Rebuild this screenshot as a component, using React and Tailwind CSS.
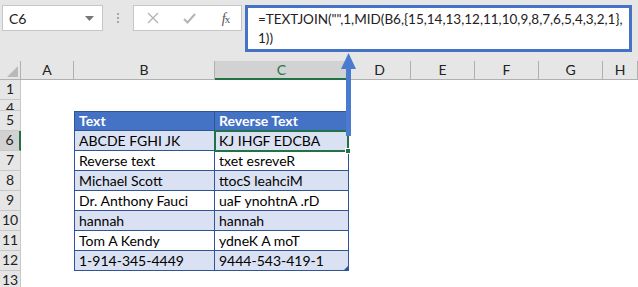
import React from "react";

const font = { fontFamily: "Lato, 'Open Sans', sans-serif" };

const cols = ["A", "B", "C", "D", "E", "F", "G", "H"];

const data = [
  ["ABCDE FGHI JK", "KJ IHGF EDCBA"],
  ["Reverse text", "txet esreveR"],
  ["Michael Scott", "ttocS leahciM"],
  ["Dr. Anthony Fauci", "uaF ynohtnA .rD"],
  ["hannah", "hannah"],
  ["Tom A Kendy", "ydneK A moT"],
  ["1-914-345-4449", "9444-543-419-1"],
];

const gridCols = "grid grid-cols-[21px_53px_141px_134px_62px_64px_64px_64px_35px]";

const RowHead = ({ n, h, active, clipped }) => (
  <div
    className={`${h} flex justify-center border-b border-r border-[#c8c8c8] text-[14px] leading-none text-[#222] overflow-hidden ${
      clipped ? "items-start" : "items-end"
    } ${active ? "bg-[#d2d2d2] border-r-2 border-r-[#217346]" : "bg-[#e6e6e6]"}`}
  >
    <span className={clipped ? "pt-[1px]" : "pb-[3px]"}>{n}</span>
  </div>
);

const Empty = ({ h, n = 1 }) =>
  Array.from({ length: n }).map((_, i) => <div key={i} className={`${h} bg-white`} />);

const Cell = ({ children, first, head, band }) => (
  <div
    className={`h-[20px] flex items-end px-[4px] pb-[2px] border-b border-r border-[#2f5597] text-[14px] leading-none whitespace-nowrap overflow-hidden ${
      first ? "border-l" : ""
    } ${head ? "border-t bg-[#4472c4] text-white font-bold" : band ? "bg-[#d9e1f2] text-black" : "bg-white text-black"}`}
  >
    {children}
  </div>
);

export default function App() {
  return (
    <div className="w-[638px] h-[287px] overflow-hidden bg-white relative" style={font}>
      {/* formula bar */}
      <div className="h-[61px] bg-[#e6e6e6] flex items-start pt-[5px] pl-[2px]">
        <div className="w-[101px] h-[26px] bg-white border border-[#c6c6c6] flex items-center justify-between pl-[6px] pr-[8px] text-[14px] text-[#222]">
          <span>C6</span>
          <svg width="9" height="5" viewBox="0 0 9 5">
            <path d="M0 0h9L4.5 5z" fill="#777" />
          </svg>
        </div>
        <div className="w-[30px] h-[26px] flex flex-col items-center justify-center gap-[2px]">
          <span className="w-[2px] h-[2px] bg-[#a6a6a6]" />
          <span className="w-[2px] h-[2px] bg-[#a6a6a6]" />
          <span className="w-[2px] h-[2px] bg-[#a6a6a6]" />
        </div>
        <div className="w-[109px] h-[26px] bg-white border border-[#c6c6c6] flex items-center">
          <div className="w-[38px] flex justify-center">
            <svg width="12" height="12" viewBox="0 0 12 12">
              <path d="M1 1l10 10M11 1L1 11" stroke="#b4b4b4" strokeWidth="1.4" />
            </svg>
          </div>
          <div className="w-[34px] flex justify-center">
            <svg width="13" height="11" viewBox="0 0 13 11">
              <path d="M1 6l3.5 3.5L12 1" stroke="#b4b4b4" strokeWidth="2" fill="none" />
            </svg>
          </div>
          <div className="flex-1 flex justify-center pl-[5px] text-[14px] italic text-[#555]" style={{ fontFamily: "'Liberation Serif', serif" }}>
            f<span className="text-[11px] not-italic -ml-[1px] mt-[3px]">x</span>
          </div>
        </div>
        <div className="ml-[3px] w-[387px] h-[47px] bg-white border-[3px] border-[#4472c4] pl-[10px] pt-[2px] text-[13.5px] leading-[19px] text-[#222]">
          <div>=TEXTJOIN("",1,MID(B6,&#123;15,14,13,12,11,10,9,8,7,6,5,4,3,2,1&#125;,</div>
          <div>1))</div>
        </div>
      </div>

      {/* sheet */}
      <div className={gridCols}>
        <div className="h-[19px] bg-[#e6e6e6] border-r border-b border-[#b0b0b0] flex items-end justify-end p-[2px]">
          <svg width="11" height="11" viewBox="0 0 11 11">
            <path d="M11 0v11H0z" fill="#b9b9b9" />
          </svg>
        </div>
        {cols.map((c) => (
          <div
            key={c}
            className={`h-[19px] flex items-center justify-center text-[14px] leading-none border-r ${
              c === "C"
                ? "bg-[#d2d2d2] text-[#217346] border-b-2 border-b-[#217346] border-r-[#b0b0b0]"
                : "bg-[#e6e6e6] text-[#222] border-b border-[#b0b0b0]"
            }`}
          >
            {c}
          </div>
        ))}

        <RowHead n="1" h="h-[20px]" />
        <Empty h="h-[20px]" n={8} />

        <RowHead n="4" h="h-[11px]" clipped />
        <Empty h="h-[11px]" n={8} />

        <RowHead n="5" h="h-[20px]" />
        <Empty h="h-[20px]" />
        <Cell first head>Text</Cell>
        <Cell head>Reverse Text</Cell>
        <Empty h="h-[20px]" n={5} />

        {data.map(([a, b], i) => (
          <React.Fragment key={i}>
            <RowHead n={String(i + 6)} h="h-[20px]" active={i === 0} />
            <Empty h="h-[20px]" />
            <Cell first band={i % 2 === 0}>{a}</Cell>
            <Cell band={i % 2 === 0}>{b}</Cell>
            <Empty h="h-[20px]" n={5} />
          </React.Fragment>
        ))}

        <RowHead n="13" h="h-[20px]" />
        <Empty h="h-[20px]" n={8} />
      </div>

      {/* active cell C6 */}
      <div className="absolute left-[214px] top-[130px] w-[135px] h-[22px] border-2 border-[#217346] pointer-events-none" />
      <div className="absolute left-[345px] top-[148px] w-[6px] h-[6px] bg-[#217346] border border-white" />

      {/* table resize corner */}
      <svg className="absolute left-[343px] top-[266px]" width="5" height="5" viewBox="0 0 5 5">
        <path d="M5 0v5H0z" fill="#2f5597" />
      </svg>

      {/* arrow */}
      <svg className="absolute left-[340px] top-[52px]" width="16" height="86" viewBox="0 0 16 86">
        <path d="M8.5 1L1 17h15z" fill="#4a7bd0" />
        <rect x="6" y="16" width="5" height="68" fill="#4a7bd0" />
      </svg>
    </div>
  );
}
